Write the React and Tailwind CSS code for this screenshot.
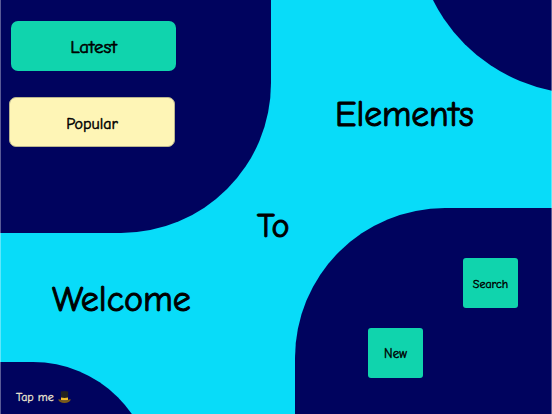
function Btn({ className, children }) {
  return (
    <button className={`flex items-center justify-center text-black ${className}`}>
      {children}
    </button>
  );
}

function TopHat() {
  return (
    <svg viewBox="0 0 13 12" className="ml-[4px] inline-block h-[12px] w-[13px] align-[-2px]">
      <path d="M2.8 0.4 Q6.5 -0.2 10.2 0.4 L9.9 7.4 Q6.5 8.2 3.1 7.4 Z" fill="#23211f" />
      <path d="M3 6.6 Q6.5 7.4 10 6.6 L10 9.2 Q6.5 10 3 9.2 Z" fill="#f2bd2c" />
      <path d="M0.2 8.4 Q2 8.2 3.1 8.9 Q6.5 10 9.9 8.9 Q11 8.2 12.8 8.4 Q11.8 11.8 6.5 11.9 Q1.2 11.8 0.2 8.4 Z" fill="#7a5a18" />
    </svg>
  );
}

export default function App() {
  return (
    <div className="relative flex h-[414px] w-[552px] overflow-hidden bg-[#08dcf9] font-['Comic_Sans_MS','Comic_Neue',cursive] text-black">
      <div className="flex w-[295px] flex-col">
        <div className="flex h-[233px] w-[271px] flex-col rounded-br-[150px] bg-[#00035e]">
          <Btn className="ml-[11px] mt-[21px] h-[50px] w-[165px] rounded-[7px] bg-[#10d4ad] pt-[2px] text-[19px] [-webkit-text-stroke:0.6px_black]">Latest</Btn>
          <Btn className="ml-[9px] mt-[26px] h-[50px] w-[166px] rounded-[7px] border border-[#b9b58f] bg-[#fef5b6] pt-[4px] text-[16px] [-webkit-text-stroke:0.5px_black]">Popular</Btn>
        </div>
        <div className="-mt-[31px] ml-[257px] text-[34px] leading-[48px] [-webkit-text-stroke:1px_black]">To</div>
        <div className="ml-[52px] mt-[25px] text-[36px] leading-[50px] [-webkit-text-stroke:1px_black]">Welcome</div>
        <div className="mt-auto h-[52px] w-[153px] overflow-hidden">
          <div className="h-[120px] rounded-tr-[120px] bg-[#00035e] pl-[16px] pt-[27px] text-[12px] leading-[16px] text-[#ece6d0] [-webkit-text-stroke:0.3px_#ece6d0]">
            Tap me<TopHat />
          </div>
        </div>
      </div>
      <div className="flex flex-1 flex-col">
        <div className="ml-[120px] h-[94px] w-[137px] overflow-hidden">
          <div className="-mt-[106px] h-[200px] w-[200px] rounded-bl-[170px] bg-[#00035e]"></div>
        </div>
        <div className="ml-[40px] -mt-[2px] text-[35.5px] leading-[46px] [-webkit-text-stroke:1px_black]">Elements</div>
        <div className="mt-auto flex h-[206px] w-[257px] flex-col rounded-tl-[150px] bg-[#00035e]">
          <Btn className="ml-[168px] mt-[50px] h-[50px] w-[55px] rounded-[3px] bg-[#10d4ad] pt-[2px] text-[12px] [-webkit-text-stroke:0.4px_black]">Search</Btn>
          <Btn className="ml-[73px] mt-[20px] h-[50px] w-[55px] rounded-[3px] bg-[#10d4ad] pt-[2px] text-[13px] [-webkit-text-stroke:0.4px_black]">New</Btn>
        </div>
      </div>
      <div className="pointer-events-none absolute inset-y-0 left-0 w-px bg-white/35"></div>
      <div className="pointer-events-none absolute inset-y-0 right-0 w-px bg-white/35"></div>
    </div>
  );
}
